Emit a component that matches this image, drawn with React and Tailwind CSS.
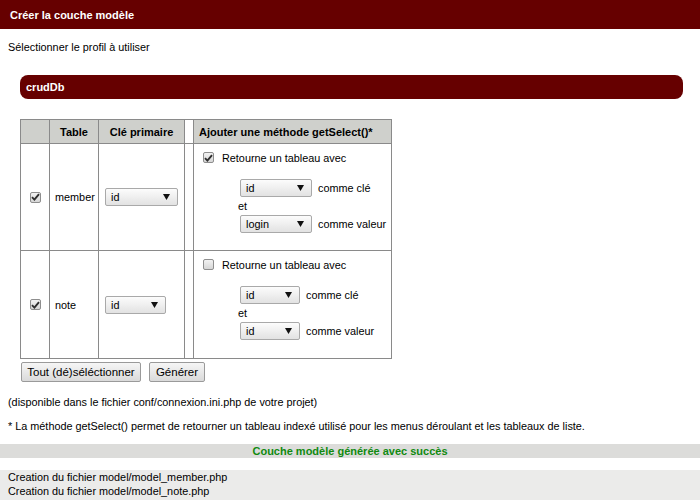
import React from 'react'

const Arrow = () => (
    <svg width="7" height="6" viewBox="0 0 7 6" className="shrink-0">
        <polygon points="0,0 7,0 3.5,6" fill="#111" />
    </svg>
)

const Select = ({ value, width }) => (
    <span className={`inline-flex items-center justify-between h-[18px] ${width} border border-[#a9a9a9] rounded-[2px] bg-gradient-to-b from-[#fcfcfc] to-[#e2e2e2] pl-[5px] pr-[7px] text-black`}>
        <span>{value}</span>
        <Arrow />
    </span>
)

const Check = ({ on }) => (
    <span className="inline-flex w-[11px] h-[11px] shrink-0 items-center justify-center border border-[#8e8e8e] rounded-[2px] bg-gradient-to-b from-[#f2f2f2] to-[#d6d6d6]">
        {on && (
            <svg width="9" height="8" viewBox="0 0 9 8">
                <path d="M1 4.2 L3.4 6.6 L8 1.2" stroke="#2e2e2e" strokeWidth="1.9" fill="none" />
            </svg>
        )}
    </span>
)

const Button = ({ children, width }) => (
    <button className={`h-[20px] ${width} border border-[#9a9a9a] rounded-[2px] bg-gradient-to-b from-[#f6f6f6] to-[#dadada] text-[11.5px] text-black`}>
        {children}
    </button>
)

const rows = [
    { name: 'member', checked: true, pk: 'w-[73px]', sel: 'w-[72px]', key: 'id', val: 'login', h: 'h-[107px]' },
    { name: 'note', checked: true, pk: 'w-[61px]', sel: 'w-[60px]', key: 'id', val: 'id', h: 'h-[108px]' },
]

const App = () => {
    return (
        <div className="w-[700px] h-[500px] overflow-hidden bg-white text-[10.85px] leading-[14px] text-black font-['Liberation_Sans',Arial,sans-serif]">
            <div className="h-[29px] bg-[#660000] flex items-center pl-[10px] text-white font-bold text-[11px]">
                Créer la couche modèle
            </div>

            <p className="mt-[11px] ml-[8px]">Sélectionner le profil à utiliser</p>

            <div className="mt-[21px] ml-[20px] w-[663px] h-[24px] rounded-[8px] bg-[#660000] flex items-center pl-[6px] text-white font-bold text-[11px]">
                crudDb
            </div>

            <table className="mt-[20px] ml-[20px] border-collapse table-fixed w-[371px]">
                <colgroup>
                    <col className="w-[29px]" />
                    <col className="w-[49px]" />
                    <col className="w-[86px]" />
                    <col className="w-[9px]" />
                    <col className="w-[198px]" />
                </colgroup>
                <thead>
                    <tr className="h-[24px] text-[11px]">
                        <th className="border border-[#8a8a8a] bg-[#cfd0cc]"></th>
                        <th className="border border-[#8a8a8a] bg-[#cfd0cc] font-bold">Table</th>
                        <th className="border border-[#8a8a8a] bg-[#cfd0cc] font-bold">Clé primaire</th>
                        <th className="border border-[#8a8a8a]"></th>
                        <th className="border border-[#8a8a8a] bg-[#cfd0cc] font-bold text-left pl-[5px]">Ajouter une méthode getSelect()*</th>
                    </tr>
                </thead>
                <tbody>
                    {rows.map((r, i) => (
                        <tr key={r.name} className={r.h}>
                            <td className="border border-[#8a8a8a] align-middle">
                                <div className="flex justify-center pl-[1px]">
                                    <Check on={r.checked} />
                                </div>
                            </td>
                            <td className="border border-[#8a8a8a] align-middle pl-[5px]">{r.name}</td>
                            <td className="border border-[#8a8a8a] align-middle pl-[6px]">
                                <Select value="id" width={r.pk} />
                            </td>
                            <td className="border border-[#8a8a8a]"></td>
                            <td className="border border-[#8a8a8a] align-top pt-[8px] pl-[9px]">
                                <div className="flex items-center h-[11px]">
                                    <Check on={i === 0} />
                                    <span className="ml-[8px]">Retourne un tableau avec</span>
                                </div>
                                <div className="mt-[16px] pl-[37px]">
                                    <div className="flex items-center gap-[6px]">
                                        <Select value={r.key} width={r.sel} />
                                        <span>comme clé</span>
                                    </div>
                                    <div className="h-[18px] leading-[18px] -ml-[2px]">et</div>
                                    <div className="flex items-center gap-[6px]">
                                        <Select value={r.val} width={r.sel} />
                                        <span>comme valeur</span>
                                    </div>
                                </div>
                            </td>
                        </tr>
                    ))}
                </tbody>
            </table>

            <div className="mt-[3px] ml-[21px] flex gap-[8px]">
                <Button width="w-[120px]">Tout (dé)séléctionner</Button>
                <Button width="w-[56px]">Générer</Button>
            </div>

            <p className="mt-[13px] ml-[8px]">(disponible dans le fichier conf/connexion.ini.php de votre projet)</p>

            <p className="mt-[10px] ml-[8px]">
                * La méthode getSelect() permet de retourner un tableau indexé utilisé pour les menus déroulant et les tableaux de liste.
            </p>

            <div className="mt-[11px] h-[14px] bg-[#dcdcda] flex items-center justify-center font-bold text-[11px] text-[#108a10]">
                Couche modèle générée avec succès
            </div>

            <div className="mt-[12px] bg-[#ebebea] pl-[8px] h-[40px]">
                <div>Creation du fichier model/model_member.php</div>
                <div>Creation du fichier model/model_note.php</div>
            </div>
        </div>
    )
}

export default App
